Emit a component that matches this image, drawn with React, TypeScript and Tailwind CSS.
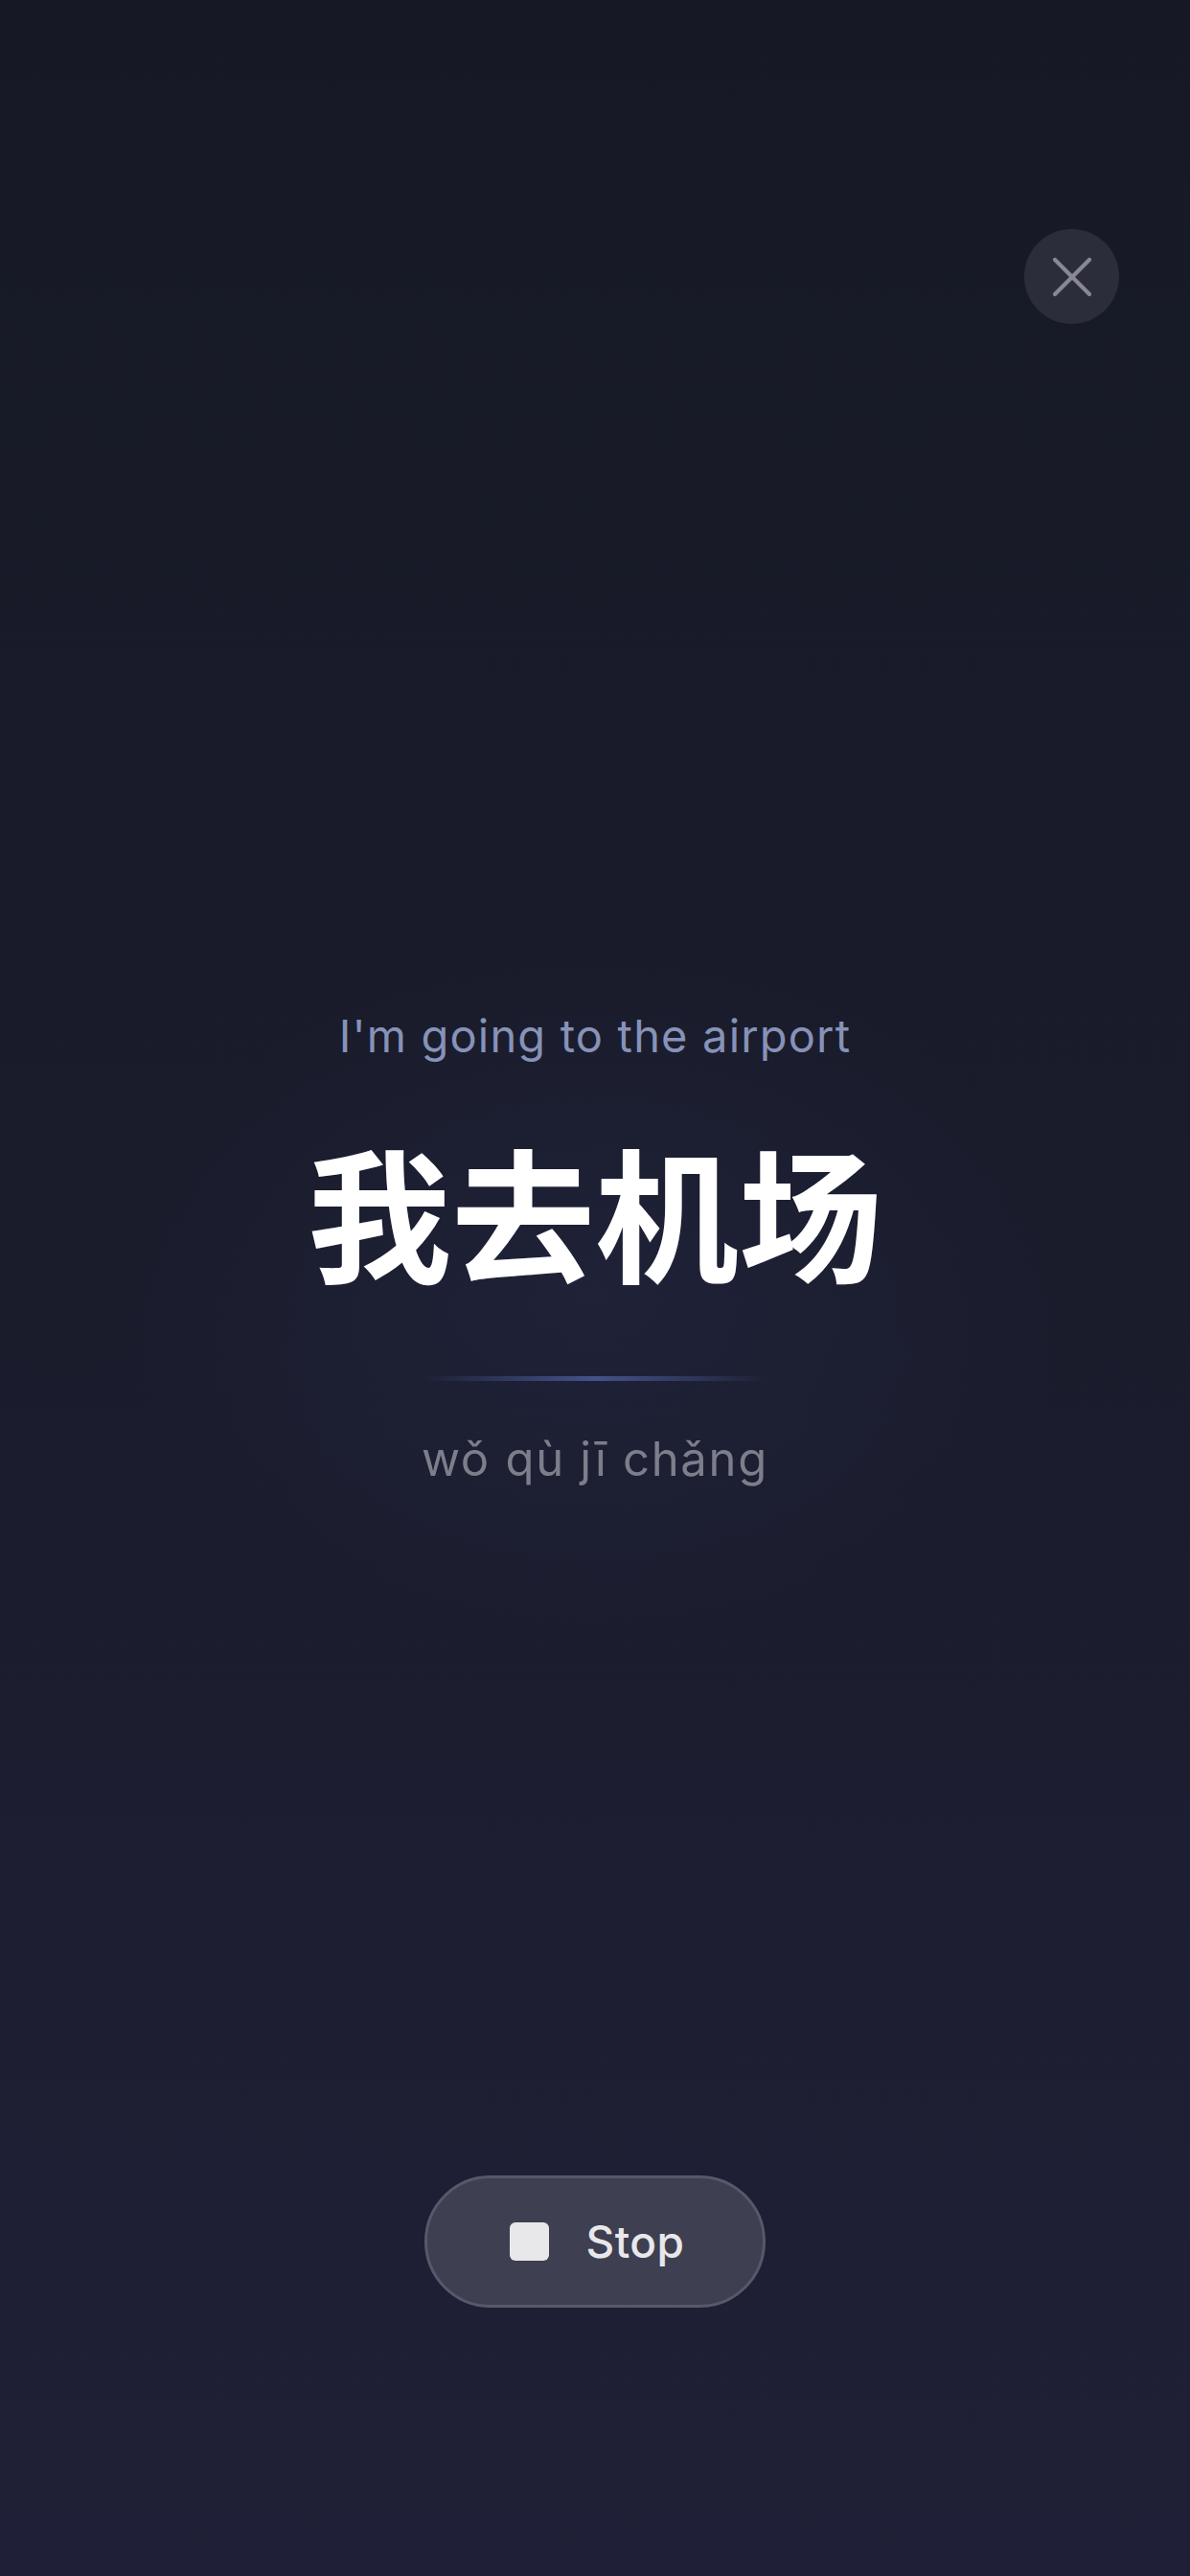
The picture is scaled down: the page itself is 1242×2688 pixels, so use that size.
import { X } from 'lucide-react'

export default function App() {
  return (
    <main
      className="relative flex min-h-[2688px] w-full flex-col items-center overflow-hidden bg-gradient-to-b from-[#161925] via-[#1a1c2c] to-[#1f2037] font-['Inter','Noto_Sans_CJK_SC',sans-serif]"
    >
      {/* soft glow behind the phrase */}
      <div className="pointer-events-none absolute left-1/2 top-[1000px] h-[700px] w-[1000px] -translate-x-1/2 rounded-full bg-[radial-gradient(closest-side,rgba(40,46,78,0.35),transparent)]" />

      <div className="flex w-full justify-end pr-[74px] pt-[239px]">
        <button className="flex h-[99px] w-[99px] items-center justify-center rounded-full bg-[#2b2d3b]">
          <X className="h-[72px] w-[72px] text-[#878892]" strokeWidth={1.4} />
        </button>
      </div>

      <div className="relative flex flex-col items-center">
        <p className="mt-[716px] text-[47px] leading-[54px] tracking-[0.025em] text-[#8792b8]">
          I'm going to the airport
        </p>
        <h1 className="mt-[79px] font-['Noto_Sans_CJK_SC',sans-serif] text-[150px] font-bold leading-[150px] text-white">
          我去机场
        </h1>
        <div className="mt-[99px] h-[5px] w-[356px] bg-gradient-to-r from-transparent via-[#44528a] to-transparent" />
        <p className="mt-[53px] text-[49px] leading-[58px] tracking-[0.035em] text-[#7d7e8c]">
          wǒ qù jī chǎng
        </p>
      </div>

      <button className="relative mt-[718px] flex h-[138px] w-[356px] items-center justify-center gap-[39px] rounded-full border-[3px] border-[#575869] bg-[#3e3f51] pl-[4px]">
        <span className="h-[40px] w-[41px] rounded-[6px] bg-[#e8e8eb]" />
        <span className="text-[46px] font-medium leading-none tracking-[0.01em] text-[#e8e8eb]">Stop</span>
      </button>
    </main>
  )
}
